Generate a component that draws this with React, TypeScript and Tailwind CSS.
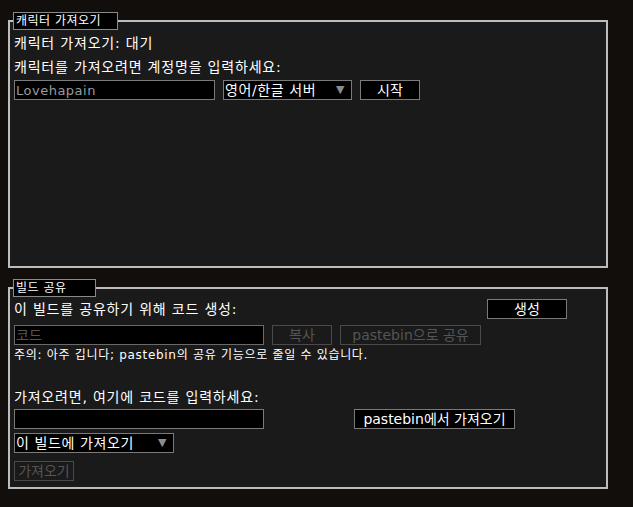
import React from "react";

const font = { fontFamily: '"DejaVu Sans", "Noto Sans CJK KR", sans-serif' };

function Legend({ label, width }: { label: string; width: string }) {
  return (
    <legend
      className={`${width} -ml-px h-[18px] border border-[#8a8a8a] bg-black px-[2px] text-[12px] leading-4 tracking-[0.5px] text-white`}
    >
      {label}
    </legend>
  );
}

function Select({ label, width }: { label: string; width: string }) {
  return (
    <div
      className={`${width} flex h-5 items-center justify-between border border-[#7a7a7a] bg-black pl-px pr-[6px] text-[14px] leading-5 tracking-[0.6px] text-white`}
    >
      <span>{label}</span>
      <span className="text-[11px] text-[#8c8c8c]">▼</span>
    </div>
  );
}

function Button({
  label,
  width,
  disabled,
}: {
  label: string;
  width: string;
  disabled?: boolean;
}) {
  return (
    <button
      disabled={disabled}
      className={`${width} h-5 border text-[14px] leading-[18px] ${
        disabled
          ? "border-[#4a4a4a] bg-[#1a1a1a] text-[#555]"
          : "border-[#7a7a7a] bg-black text-white"
      }`}
    >
      {label}
    </button>
  );
}

export default function App() {
  return (
    <div className="min-h-[507px] w-full bg-[#110e0c] pt-3" style={font}>
      {/* Character import */}
      <fieldset className="ml-2 h-[256px] w-[600px] border-2 border-[#bdbdbd] bg-[#1a1a1a] px-1 text-white">
        <Legend label="캐릭터 가져오기" width="w-[105px]" />
        <div className="mt-[3px] h-5 text-[14px] leading-5 tracking-[0.8px]">캐릭터 가져오기: 대기</div>
        <div className="mt-1 h-5 text-[14px] leading-5 tracking-[0.8px]">
          캐릭터를 가져오려면 계정명을 입력하세요:
        </div>
        <div className="mt-[3px] flex h-5 items-center gap-2">
          <input
            readOnly
            value="Lovehapain"
            className="h-5 w-[201px] border border-[#7a7a7a] bg-black px-px text-[13px] tracking-[0.5px] text-[#9a9a9a] outline-none"
          />
          <Select label="영어/한글 서버" width="w-[129px]" />
          <Button label="시작" width="w-[60px]" />
        </div>
      </fieldset>

      {/* Build sharing */}
      <fieldset className="ml-2 mt-[11px] w-[600px] border-2 border-[#bdbdbd] bg-[#1a1a1a] px-1 pb-1 text-white">
        <Legend label="빌드 공유" width="w-[83px]" />
        <div className="mt-[2px] flex h-5 items-center text-[14px] leading-5">
          <span className="tracking-[0.8px]">이 빌드를 공유하기 위해 코드 생성:</span>
          <div className="ml-auto mr-[35px]">
            <Button label="생성" width="w-[80px]" />
          </div>
        </div>
        <div className="mt-[6px] flex h-5 items-center gap-2">
          <input
            readOnly
            placeholder="코드"
            className="h-5 w-[250px] border border-[#6a6a6a] bg-black px-px text-[14px] text-[#9a9a9a] outline-none placeholder:text-[#555]"
          />
          <Button label="복사" width="w-[60px]" disabled />
          <Button label="pastebin으로 공유" width="w-[141px]" disabled />
        </div>
        <div className="mt-[2px] h-4 text-[12px] leading-4 tracking-[0.7px]">
          주의: 아주 깁니다; pastebin의 공유 기능으로 줄일 수 있습니다.
        </div>
        <div className="mt-6 h-5 text-[14px] leading-5 tracking-[0.8px]">
          가져오려면, 여기에 코드를 입력하세요:
        </div>
        <div className="mt-[2px] flex h-5 items-center">
          <input
            readOnly
            className="h-5 w-[250px] border border-[#7a7a7a] bg-black px-px text-[14px] text-white outline-none"
          />
          <div className="ml-[90px]">
            <Button label="pastebin에서 가져오기" width="w-[161px]" />
          </div>
        </div>
        <div className="mt-1">
          <Select label="이 빌드에 가져오기" width="w-[160px]" />
        </div>
        <div className="mt-[6px]">
          <Button label="가져오기" width="w-[60px]" disabled />
        </div>
      </fieldset>
    </div>
  );
}
